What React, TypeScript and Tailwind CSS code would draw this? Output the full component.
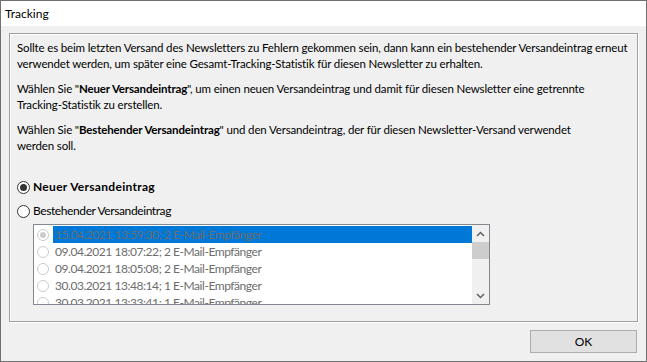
import React from "react";

const rows = [
  "15.04.2021 13:59:30; 2 E-Mail-Empfänger",
  "09.04.2021 18:07:22; 2 E-Mail-Empfänger",
  "09.04.2021 18:05:08; 2 E-Mail-Empfänger",
  "30.03.2021 13:48:14; 1 E-Mail-Empfänger",
  "30.03.2021 13:33:41; 1 E-Mail-Empfänger",
];

function Radio({ checked }: { checked?: boolean }) {
  return (
    <span className="w-[13px] h-[13px] rounded-full border border-[#333333] bg-white flex items-center justify-center shrink-0">
      {checked && <span className="w-[7px] h-[7px] rounded-full bg-[#333333]" />}
    </span>
  );
}

function DisRadio({ checked }: { checked?: boolean }) {
  return (
    <span className="w-[12px] h-[12px] rounded-full border border-[#cccccc] bg-white flex items-center justify-center shrink-0">
      {checked && <span className="w-[6px] h-[6px] rounded-full bg-[#cccccc]" />}
    </span>
  );
}

export default function App() {
  return (
    <div
      className="w-[647px] h-[362px] border border-[#707070] bg-[#f0f0f0] flex flex-col text-[12px] text-black overflow-hidden"
      style={{ fontFamily: 'Lato, "Noto Sans", sans-serif' }}
    >
      <div className="h-[25px] bg-white flex items-center pl-[4px] shrink-0">Tracking</div>
      <div className="flex-1 flex flex-col px-[8px] pt-[7px]">
        <div className="h-[289px] border border-[#a0a0a0] shadow-[inset_1px_1px_0_#ffffff,1px_1px_0_#ffffff] pl-[7px] pt-[6px] pr-[8px] flex flex-col">
          <p className="leading-[16px] whitespace-nowrap text-[11.5px] tracking-[-0.15px]">
            Sollte es beim letzten Versand des Newsletters zu Fehlern gekommen sein, dann kann ein bestehender Versandeintrag erneut
            <br />
            verwendet werden, um später eine Gesamt-Tracking-Statistik für diesen Newsletter zu erhalten.
          </p>
          <p className="leading-[16px] mt-[9px] whitespace-nowrap text-[11.5px] tracking-[-0.15px]">
            Wählen Sie "<b>Neuer Versandeintrag</b>", um einen neuen Versandeintrag und damit für diesen Newsletter eine getrennte
            <br />
            Tracking-Statistik zu erstellen.
          </p>
          <p className="leading-[16px] mt-[9px] whitespace-nowrap text-[11.5px] tracking-[-0.15px]">
            Wählen Sie "<b>Bestehender Versandeintrag</b>" und den Versandeintrag, der für diesen Newsletter-Versand verwendet
            <br />
            werden soll.
          </p>
          <div className="mt-[25px] h-[16px] flex items-center gap-[3px] font-bold">
            <Radio checked />
            <span className="tracking-[0.3px]">Neuer Versandeintrag</span>
          </div>
          <div className="mt-[8px] h-[16px] flex items-center gap-[3px]">
            <Radio />
            <span className="tracking-[-0.4px]">Bestehender Versandeintrag</span>
          </div>
          <div className="ml-[16px] mt-[5px] w-[457px] h-[81px] border border-[#828790] bg-white flex overflow-hidden">
            <div className="flex-1 pt-[1px] flex flex-col overflow-hidden">
              {rows.map((r, i) => (
                <div key={r} className="h-[17px] shrink-0 flex items-center pl-[3px]">
                  <DisRadio checked={i === 0} />
                  <span
                    className={
                      "ml-[4px] flex-1 h-[17px] leading-[17px] pl-[2px] text-[#6d6d6d] whitespace-nowrap tracking-[-0.45px] " +
                      (i === 0 ? "bg-[#0078d7]" : "")
                    }
                  >
                    {r}
                  </span>
                </div>
              ))}
            </div>
            <div className="w-[17px] bg-[#f0f0f0] flex flex-col items-center">
              <div className="h-[17px] w-full flex items-center justify-center">
                <svg width="9" height="6" viewBox="0 0 9 6"><path d="M1 5 L4.5 1.5 L8 5" stroke="#606060" strokeWidth="1.5" fill="none" /></svg>
              </div>
              <div className="h-[17px] w-full bg-[#cdcdcd]" />
              <div className="flex-1" />
              <div className="h-[17px] w-full flex items-center justify-center">
                <svg width="9" height="6" viewBox="0 0 9 6"><path d="M1 1 L4.5 4.5 L8 1" stroke="#606060" strokeWidth="1.5" fill="none" /></svg>
              </div>
            </div>
          </div>
        </div>
        <div className="mt-[8px] flex justify-end pr-[1px]">
          <button className="w-[107px] h-[23px] bg-[#e1e1e1] border border-[#adadad] text-[12px] leading-none">
            OK
          </button>
        </div>
      </div>
    </div>
  );
}
